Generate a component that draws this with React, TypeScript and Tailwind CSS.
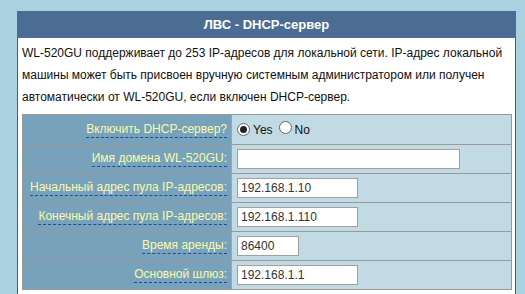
import React from "react";

const rows: { label: string; kind: "radio" | "input"; value?: string; w?: number }[] = [
  { label: "Включить DHCP-сервер?", kind: "radio" },
  { label: "Имя домена WL-520GU:", kind: "input", value: "", w: 223 },
  { label: "Начальный адрес пула IP-адресов:", kind: "input", value: "192.168.1.10", w: 121 },
  { label: "Конечный адрес пула IP-адресов:", kind: "input", value: "192.168.1.110", w: 121 },
  { label: "Время аренды:", kind: "input", value: "86400", w: 62 },
  { label: "Основной шлюз:", kind: "input", value: "192.168.1.1", w: 121 },
];

function Radio({ checked }: { checked?: boolean }) {
  return (
    <span className="inline-flex h-[13px] w-[13px] items-center justify-center rounded-full border border-[#666] bg-white">
      {checked && <span className="h-[7px] w-[7px] rounded-full bg-[#222]" />}
    </span>
  );
}

export default function App() {
  return (
    <div
      className="h-[294px] overflow-hidden bg-[#a9d1e0] pl-[17px] pt-[11px]"
      style={{ fontFamily: '"Liberation Sans", Arial, sans-serif' }}
    >
      <div className="w-[499px]">
        <div className="flex h-[27px] items-center justify-center bg-[#4b6d93] text-[13px] font-bold text-white">
          ЛВС - DHCP-сервер
        </div>
        <div className="border-x border-[#3e5f85] bg-white px-[4px] pb-[10px] pt-[4px]">
          <p className="text-[12px] leading-[22px] text-[#111]">
            WL-520GU поддерживает до 253 IP-адресов для локальной сети. IP-адрес локальной машины может быть присвоен
            вручную системным администратором или получен автоматически от WL-520GU, если включен DHCP-сервер.
          </p>
          <div className="mt-[6px] w-[490px] border border-[#999]">
            {rows.map((r, i) => (
              <div key={i} className={`flex h-[29px] ${i > 0 ? "border-t border-[#999]" : ""}`}>
                <div className="flex w-[208px] items-center justify-end bg-[#78a2bc] pr-[4px]">
                  <span className="whitespace-nowrap border-b border-dashed border-[#1a4f9c] text-[12px] leading-[15px] text-[#fafaa8]">
                    {r.label}
                  </span>
                </div>
                <div className="flex flex-1 items-center border-l border-[#8fa9b8] bg-[#c1dae3] pl-[5px] text-[12px] text-[#111]">
                  {r.kind === "radio" ? (
                    <div className="flex items-center">
                      <Radio checked />
                      <span className="ml-[3px]">Yes</span>
                      <span className="ml-[6px]">
                        <Radio />
                      </span>
                      <span className="ml-[3px]">No</span>
                    </div>
                  ) : (
                    <div
                      className="flex h-[20px] items-center border border-[#a0a0a0] bg-white px-[3px] text-[12px] text-[#333]"
                      style={{ width: r.w }}
                    >
                      {r.value}
                    </div>
                  )}
                </div>
              </div>
            ))}
          </div>
        </div>
      </div>
    </div>
  );
}
